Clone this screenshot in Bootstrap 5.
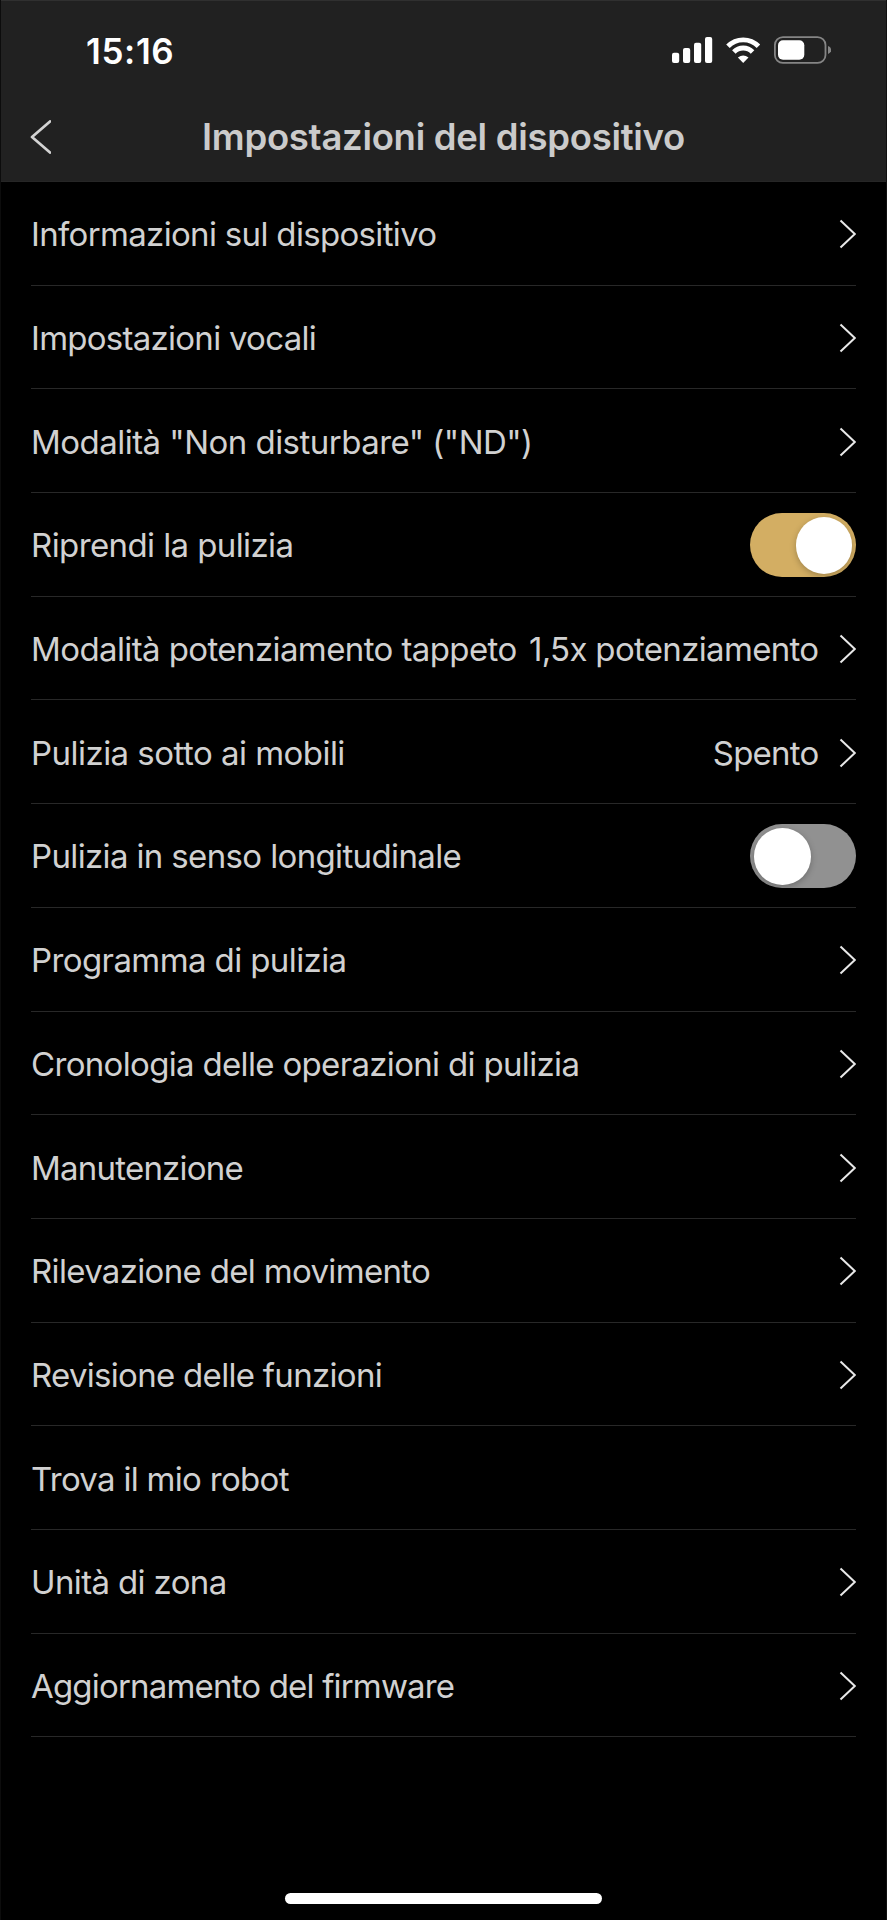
<!DOCTYPE html>
<html lang="it">
<head>
<meta charset="utf-8">
<meta name="viewport" content="width=device-width, initial-scale=1">
<title>Impostazioni del dispositivo</title>
<link rel="stylesheet" href="https://cdn.jsdelivr.net/npm/bootstrap@5.3.0/dist/css/bootstrap.min.css">
<style>
  html, body { height: 100%; }
  body { background: #000; color: #d1d1d1; font-family: Inter, "Liberation Sans", sans-serif; }
  .screen { height: 1920px; overflow: hidden; border-left: 1px solid #0c0c0c; border-right: 1px solid #101010; }
  .app-header { height: 182px; margin: 0 -1px; background: #212121; border-top: 1px solid #303030; border-bottom: 1px solid #262626; }
  .status-bar { height: 100px; padding: 0 56px 0 86px; }
  .clock { font-size: 35px; font-weight: 600; letter-spacing: .65px; line-height: 1; color: #fff; padding-top: 1px; }
  .title-bar { height: 72px; padding: 0 30px; }
  .title-bar h1 { font-size: 36.5px; font-weight: 600; letter-spacing: -.29px; line-height: 1; color: #cbcbcb; }
  .side-slot { width: 21px; }
  .settings { padding: 0 30px; }
  .setting { height: 103.7px; border-bottom: 1px solid #282828; font-size: 33px; line-height: 40px; letter-spacing: -.67px; white-space: nowrap; padding-top: 2px; }
  .setting .value { margin-right: 20.5px; }
  .t1 { letter-spacing: -.53px; }
  .t2 { letter-spacing: -.6px; }
  .t3 { letter-spacing: -.64px; }
  .t4 { letter-spacing: -.73px; }
  .t5 { letter-spacing: -.78px; }
  .t6 { letter-spacing: -.82px; }
  .t7 { letter-spacing: -.7px; }
  .toggle { width: 106px; height: 64px; padding: 4px; border-radius: 32px; background: #919191; }
  .toggle.on { background: #d3ae63; justify-content: flex-end; }
  .knob { width: 56.5px; height: 56.5px; border-radius: 50%; background: #fff; box-shadow: 0 2px 6px rgba(0,0,0,.25); }
  .home-bar { width: 317.5px; height: 10.5px; border-radius: 6px; background: #fff; margin-bottom: 16.5px; }
</style>
</head>
<body>
<svg class="d-none">
  <symbol id="chev" viewBox="0 0 17 30"><path d="M1.5 1.5 15.8 15 1.5 28.5" fill="none" stroke="#e8e8e8" stroke-width="2"/></symbol>
</svg>
<div class="screen d-flex flex-column">
  <header class="app-header flex-shrink-0">
    <div class="status-bar d-flex align-items-center justify-content-between">
      <span class="clock">15:16</span>
      <svg width="160" height="30" viewBox="0 0 160 30" fill="#fff">
        <rect x="1" y="16.7" width="7.2" height="10.3" rx="2"/>
        <rect x="12" y="12" width="7.2" height="15" rx="2"/>
        <rect x="23" y="6.7" width="7.2" height="20.3" rx="2"/>
        <rect x="34" y="1" width="7.2" height="26" rx="2"/>
        <g transform="translate(54.7 1)">
          <path d="M2.25 9.3A21.2 21.2 0 0 1 32.75 9.3M8.15 15A13 13 0 0 1 26.85 15" fill="none" stroke="#fff" stroke-width="4.9"/>
          <path d="M12.2 20.6Q17.5 16.2 22.8 20.6L17.5 26z"/>
        </g>
        <rect x="103.9" y="1.1" width="50.6" height="25.8" rx="8" fill="none" stroke="#858585" stroke-width="1.8"/>
        <rect x="107" y="4.3" width="26.3" height="19.4" rx="5"/>
        <path d="M157 10v8q3.2-1 3.2-4t-3.2-4z" fill="#858585"/>
      </svg>
    </div>
    <nav class="title-bar d-flex align-items-center justify-content-between">
      <svg class="side-slot" height="34" viewBox="0 0 21 34"><path d="M20 1.4 2 17 20 32.6" fill="none" stroke="#d3d3d3" stroke-width="2.7" stroke-linecap="round" stroke-linejoin="round"/></svg>
      <h1 class="m-0">Impostazioni del dispositivo</h1>
      <span class="side-slot"></span>
    </nav>
  </header>

  <main class="settings flex-grow-1">
    <div class="setting d-flex align-items-center"><span class="me-auto">Informazioni sul dispositivo</span><svg width="17" height="30"><use href="#chev"/></svg></div>
    <div class="setting d-flex align-items-center"><span class="me-auto t4">Impostazioni vocali</span><svg width="17" height="30"><use href="#chev"/></svg></div>
    <div class="setting d-flex align-items-center"><span class="me-auto t1">Modalità "Non disturbare" ("ND")</span><svg width="17" height="30"><use href="#chev"/></svg></div>
    <div class="setting d-flex align-items-center"><span class="me-auto t2">Riprendi la pulizia</span><span class="toggle on d-flex" role="switch" aria-checked="true"><span class="knob"></span></span></div>
    <div class="setting d-flex align-items-center"><span class="me-auto t2">Modalità potenziamento tappeto</span><span class="value">1,5x potenziamento</span><svg width="17" height="30"><use href="#chev"/></svg></div>
    <div class="setting d-flex align-items-center"><span class="me-auto t1">Pulizia sotto ai mobili</span><span class="value t5">Spento</span><svg width="17" height="30"><use href="#chev"/></svg></div>
    <div class="setting d-flex align-items-center"><span class="me-auto t3">Pulizia in senso longitudinale</span><span class="toggle d-flex" role="switch" aria-checked="false"><span class="knob"></span></span></div>
    <div class="setting d-flex align-items-center"><span class="me-auto t2">Programma di pulizia</span><svg width="17" height="30"><use href="#chev"/></svg></div>
    <div class="setting d-flex align-items-center"><span class="me-auto">Cronologia delle operazioni di pulizia</span><svg width="17" height="30"><use href="#chev"/></svg></div>
    <div class="setting d-flex align-items-center"><span class="me-auto t5">Manutenzione</span><svg width="17" height="30"><use href="#chev"/></svg></div>
    <div class="setting d-flex align-items-center"><span class="me-auto">Rilevazione del movimento</span><svg width="17" height="30"><use href="#chev"/></svg></div>
    <div class="setting d-flex align-items-center"><span class="me-auto t7">Revisione delle funzioni</span><svg width="17" height="30"><use href="#chev"/></svg></div>
    <div class="setting d-flex align-items-center"><span class="me-auto t7">Trova il mio robot</span></div>
    <div class="setting d-flex align-items-center"><span class="me-auto t3">Unità di zona</span><svg width="17" height="30"><use href="#chev"/></svg></div>
    <div class="setting d-flex align-items-center"><span class="me-auto t6">Aggiornamento del firmware</span><svg width="17" height="30"><use href="#chev"/></svg></div>
  </main>
  <div class="home-bar mx-auto flex-shrink-0"></div>
</div>
<script src="https://cdn.jsdelivr.net/npm/bootstrap@5.3.0/dist/js/bootstrap.bundle.min.js"></script>
</body>
</html>
